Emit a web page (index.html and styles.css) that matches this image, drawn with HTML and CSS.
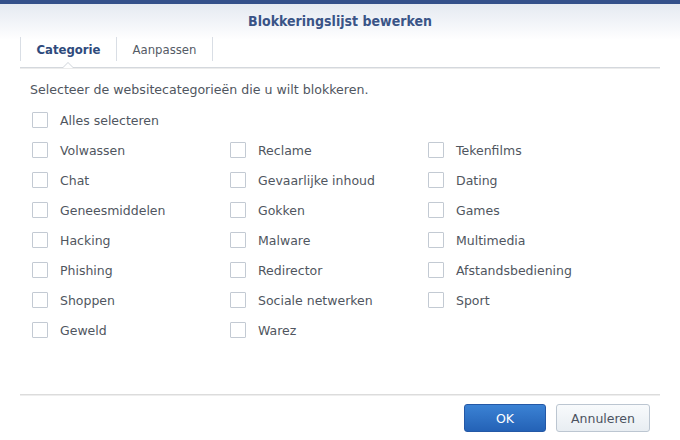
FILE: index.html
```html
<!DOCTYPE html>
<html>
<head>
<meta charset="utf-8">
<link rel="stylesheet" href="styles.css">
</head>
<body>
<div class="dialog">
  <div class="topbar"></div>
  <div class="header"><span class="title">Blokkeringslijst bewerken</span></div>
  <div class="tabs">
    <div class="tab active">Categorie<span class="notch"></span></div>
    <div class="tab">Aanpassen</div>
  </div>
  <div class="content">
    <p class="intro">Selecteer de websitecategorieën die u wilt blokkeren.</p>
    <label class="item all"><span class="box"></span><span>Alles selecteren</span></label>
    <div class="grid">
      <label class="item"><span class="box"></span><span>Volwassen</span></label>
      <label class="item"><span class="box"></span><span>Reclame</span></label>
      <label class="item"><span class="box"></span><span>Tekenfilms</span></label>
      <label class="item"><span class="box"></span><span>Chat</span></label>
      <label class="item"><span class="box"></span><span>Gevaarlijke inhoud</span></label>
      <label class="item"><span class="box"></span><span>Dating</span></label>
      <label class="item"><span class="box"></span><span>Geneesmiddelen</span></label>
      <label class="item"><span class="box"></span><span>Gokken</span></label>
      <label class="item"><span class="box"></span><span>Games</span></label>
      <label class="item"><span class="box"></span><span>Hacking</span></label>
      <label class="item"><span class="box"></span><span>Malware</span></label>
      <label class="item"><span class="box"></span><span>Multimedia</span></label>
      <label class="item"><span class="box"></span><span>Phishing</span></label>
      <label class="item"><span class="box"></span><span>Redirector</span></label>
      <label class="item"><span class="box"></span><span>Afstandsbediening</span></label>
      <label class="item"><span class="box"></span><span>Shoppen</span></label>
      <label class="item"><span class="box"></span><span>Sociale netwerken</span></label>
      <label class="item"><span class="box"></span><span>Sport</span></label>
      <label class="item"><span class="box"></span><span>Geweld</span></label>
      <label class="item"><span class="box"></span><span>Warez</span></label>
    </div>
  </div>
  <div class="footer">
    <button class="btn primary">OK</button>
    <button class="btn">Annuleren</button>
  </div>
</div>
</body>
</html>
```
FILE: styles.css
```css
html, body {
  margin: 0;
  padding: 0;
  background: #ffffff;
}
.dialog {
  width: 680px;
  height: 440px;
  display: flex;
  flex-direction: column;
  font-family: "DejaVu Sans", Verdana, sans-serif;
  background: linear-gradient(to bottom, #e2e7ef 0px, #f3f5f9 24px, #ffffff 40px);
}
.topbar {
  height: 4px;
  background: #34508a;
}
.header {
  height: 33px;
  display: flex;
  align-items: center;
  justify-content: center;
}
.title {
  font-family: "DejaVu Sans Condensed", "DejaVu Sans", sans-serif;
  font-weight: bold;
  font-size: 14px;
  color: #3a5487;
}
.tabs {
  margin: 0 20px;
  height: 30px;
  display: flex;
  border-bottom: 1px solid #d4d8dd;
  box-shadow: 0 1px 0 #ececec;
}
.tab {
  position: relative;
  height: 24px;
  display: flex;
  align-items: center;
  justify-content: center;
  border-right: 1px solid #d9dee5;
  font-family: "DejaVu Sans Condensed", "DejaVu Sans", sans-serif;
  font-size: 13px;
  color: #555b66;
  width: 95px;
}
.tab.active {
  border-left: 1px solid #d9dee5;
  font-weight: bold;
  color: #2f4a7c;
}
.notch {
  position: absolute;
  left: 41px;
  bottom: -7px;
  width: 0;
  height: 0;
  border-left: 6px solid transparent;
  border-right: 6px solid transparent;
  border-bottom: 6px solid #cfd4da;
}
.notch::after {
  content: "";
  position: absolute;
  left: -5px;
  top: 1px;
  width: 0;
  height: 0;
  border-left: 5px solid transparent;
  border-right: 5px solid transparent;
  border-bottom: 5px solid #ffffff;
}
.content {
  flex: 1;
  padding: 0 30px;
}
.intro {
  margin: 14px 0 0 0;
  height: 15px;
  line-height: 15px;
  font-size: 12.6px;
  color: #505660;
}
.item {
  display: flex;
  align-items: center;
  height: 30px;
  font-size: 12.5px;
  color: #505660;
}
.item.all {
  margin-top: 8px;
}
.box {
  width: 14px;
  height: 14px;
  border: 1px solid #c3cad3;
  border-radius: 1px;
  background: #ffffff;
  margin-left: 2px;
  margin-right: 12px;
  flex: none;
}
.grid {
  display: grid;
  grid-template-columns: 198px 198px 198px;
}
.footer {
  margin: 0 20px;
  border-top: 1px solid #dcdcdc;
  box-shadow: inset 0 1px 0 #eeeeee;
  display: flex;
  justify-content: flex-end;
  align-items: flex-start;
  padding-top: 9px;
  padding-right: 10px;
  gap: 10px;
  box-sizing: border-box;
  height: 46px;
}
.btn {
  height: 28px;
  font-family: "DejaVu Sans", Verdana, sans-serif;
  font-size: 12.5px;
  border-radius: 3px;
  border: 1px solid #bcc6d1;
  background: linear-gradient(to bottom, #f8fafc, #e8edf2);
  color: #4b5260;
  padding: 0;
  width: 94px;
}
.btn.primary {
  width: 82px;
  border: 1px solid #2458a6;
  background: linear-gradient(to bottom, #3b82d4, #2462b6);
  color: #ffffff;
}
```
